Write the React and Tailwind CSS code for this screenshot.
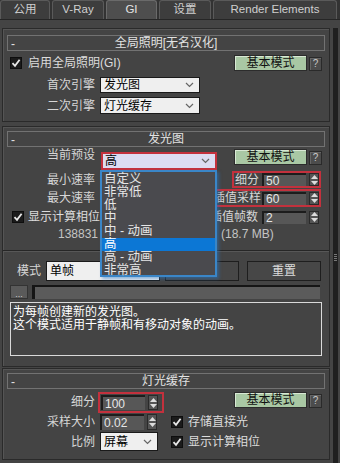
import React from "react";

const FONT = "font-['Liberation_Sans','Noto_Sans_CJK_SC',sans-serif]";

function Check() {
  return (
    <span className="inline-flex w-[12px] h-[12px] bg-[#1b1b1b] border border-[#0e0e0e] items-center justify-center shrink-0">
      <svg width="10" height="10" viewBox="0 0 10 10">
        <path d="M1.5 5.2 L4 7.8 L8.6 1.8" stroke="#e8e8e8" strokeWidth="1.8" fill="none" />
      </svg>
    </span>
  );
}

function Chevron() {
  return (
    <svg width="9" height="6" viewBox="0 0 9 6" className="ml-auto mr-[5px] shrink-0">
      <path d="M1 1 L4.5 4.5 L8 1" stroke="#666" fill="none" strokeWidth="1.2" />
    </svg>
  );
}

function Spin() {
  return (
    <div className="w-[10px] h-full flex flex-col items-center justify-center gap-[2px] bg-[#555] border border-[#2a2a2a] shrink-0">
      <svg width="7" height="4" viewBox="0 0 7 4"><path d="M0 4 L3.5 0 L7 4Z" fill="#ddd" /></svg>
      <svg width="7" height="4" viewBox="0 0 7 4"><path d="M0 0 L3.5 4 L7 0Z" fill="#ddd" /></svg>
    </div>
  );
}

function Num({ v, w = "w-[44px]" }) {
  return (
    <div className="flex h-full items-stretch gap-[3px]">
      <div className={w + " bg-[#575757] border-t-2 border-l-2 border-[#1c1c1c] text-[12px] text-[#e6e6e6] leading-none flex items-center pl-[2px]"}>{v}</div>
      <Spin />
    </div>
  );
}

function GreenBtn() {
  return (
    <div className="w-[73px] h-[16px] bg-[#a9c8a4] border border-[#2c2c2c] shadow-[inset_1px_1px_0_#d8e8d4] flex items-center justify-center text-[12px] leading-none text-[#111] shrink-0">
      基本模式
    </div>
  );
}

function Q() {
  return (
    <div className="w-[13px] h-[14px] bg-[#4c4c4c] border border-[#2a2a2a] shadow-[inset_1px_1px_0_#666] flex items-center justify-center text-[10px] leading-none text-[#c8c8c8] shrink-0 mt-[2px]">
      ?
    </div>
  );
}

function Header({ title, mt }) {
  return (
    <div className={"mx-[4px] h-[16px] border border-[#727272] flex items-center relative text-[12px] leading-none text-[#e2e2e2] shrink-0 " + mt}>
      <span className="absolute left-[3px] top-[2px] text-[12px]">-</span>
      <span className="mx-auto">{title}</span>
    </div>
  );
}

function Label({ children, w = "w-[92px]" }) {
  return <div className={w + " text-right text-[12px] leading-none text-[#d6d6d6] shrink-0"}>{children}</div>;
}

const RED = "border-2 border-[#c3313d]";

export default function App() {
  const presets = ["自定义", "非常低", "低", "中", "中 - 动画", "高", "高 - 动画", "非常高"];
  return (
    <div className={"w-[340px] h-[463px] overflow-hidden bg-[#444444] flex flex-col " + FONT}>
      {/* tabs */}
      <div className="h-[20px] flex gap-[2px] bg-[#333] border-b border-[#262626] shrink-0">
        {[
          ["公用", "w-[50px]", false],
          ["V-Ray", "w-[52px]", false],
          ["GI", "w-[51px]", true],
          ["设置", "w-[52px]", false],
          ["Render Elements", "w-[124px]", false],
        ].map(([t, w, a]) => (
          <div
            key={t}
            className={
              w +
              " h-full rounded-t-[3px] border border-b-0 flex items-center justify-center text-[11.5px] leading-none " +
              (a ? "bg-[#4e4e4e] border-[#6a6a6a] text-[#e4e4e4]" : "bg-[#3d3d3d] border-[#5a5a5a] text-[#cfcfcf]")
            }
          >
            {t}
          </div>
        ))}
      </div>

      <div className="flex flex-1 pt-[8px]">
        <div className="w-[328px] ml-[2px] flex flex-col">
          {/* Rollout 1 */}
          <div className="h-[94px] border border-[#2a2a2a] shadow-[inset_1px_1px_0_#555] flex flex-col shrink-0">
            <Header title="全局照明[无名汉化]" mt="mt-[6px]" />
            <div className="mt-[4px] h-[16px] flex items-center pl-[7px] pr-[7px]">
              <Check />
              <span className="ml-[6px] text-[12px] leading-none text-[#dcdcdc]">启用全局照明(GI)</span>
              <div className="ml-auto flex items-start gap-[2px] h-full">
                <GreenBtn />
                <Q />
              </div>
            </div>
            <div className="mt-[6px] h-[16px] flex items-center">
              <Label>首次引擎</Label>
              <div className="ml-[5px] w-[100px] h-[16px] bg-[#efefef] border border-[#1a1a1a] flex items-center pl-[3px] text-[12px] leading-none text-black">
                发光图<Chevron />
              </div>
            </div>
            <div className="mt-[4px] h-[17px] flex items-center">
              <Label>二次引擎</Label>
              <div className="ml-[5px] w-[100px] h-[17px] bg-[#efefef] border border-[#1a1a1a] flex items-center pl-[3px] text-[12px] leading-none text-black">
                灯光缓存<Chevron />
              </div>
            </div>
          </div>

          {/* Rollout 2 */}
          <div className="mt-[4px] h-[241px] border border-[#2a2a2a] shadow-[inset_1px_1px_0_#555] flex flex-col shrink-0">
            <Header title="发光图" mt="mt-[4px]" />
            {/* row A */}
            <div className="mt-[2px] h-[21px] flex items-start">
              <Label>当前预设</Label>
              <div className="relative ml-[6px] mt-[3px] z-10">
                <div className={"w-[116px] h-[18px] bg-[#dcdcf2] flex items-center pl-[2px] text-[12px] leading-none text-black " + RED}>
                  高<Chevron />
                </div>
                <div className="absolute left-[-1px] top-[18px] w-[117px] h-[107px] bg-[#4a4a4e] border-2 border-[#3a86c8] shadow-[2px_2px_3px_rgba(40,120,200,0.5)] flex flex-col pt-[1px]">
                  {presets.map((p) => (
                    <div
                      key={p}
                      className={
                        "h-[13px] pl-[2px] text-[12.5px] leading-[13px] " +
                        (p === "高" ? "bg-[#0c77d5] text-white" : "text-[#e6e6e6]")
                      }
                    >
                      {p}
                    </div>
                  ))}
                </div>
              </div>
              <div className="ml-auto mr-[7px] flex items-start gap-[2px]">
                <GreenBtn />
                <Q />
              </div>
            </div>
            {/* row B */}
            <div className="mt-[1px] h-[17px] flex items-center">
              <Label>最小速率</Label>
              <div className={"ml-auto mr-[8px] w-[89px] h-[17px] flex items-center " + RED}>
                <span className="ml-[1px] text-[12px] leading-none text-[#d6d6d6]">细分</span>
                <div className="ml-auto h-[13px] mr-[0px]">
                  <Num v="50" />
                </div>
              </div>
            </div>
            {/* row C */}
            <div className="mt-[1px] h-[18px] flex items-center">
              <Label>最大速率</Label>
              <div className={"ml-auto mr-[8px] w-[114px] h-[18px] flex items-center " + RED}>
                <span className="ml-[4px] text-[12px] leading-none text-[#d6d6d6]">插值采样</span>
                <div className="ml-auto h-[13px]">
                  <Num v="60" />
                </div>
              </div>
            </div>
            {/* row D */}
            <div className="mt-[1px] h-[18px] flex items-center pl-[9px]">
              <Check />
              <span className="ml-[4px] text-[12px] leading-none text-[#dcdcdc]">显示计算相位</span>
              <div className="ml-auto mr-[10px] flex items-center h-[13px] gap-[4px]">
                <span className="text-[12px] leading-none text-[#d6d6d6]">插值帧数</span>
                <Num v="2" />
              </div>
            </div>
            {/* row E */}
            <div className="mt-[1px] h-[14px] flex items-center text-[12px] leading-none text-[#c4c4c4]">
              <div className="w-[95px] text-right">138831</div>
              <div className="ml-[123px]">(18.7 MB)</div>
            </div>
            {/* separator */}
            <div className="mt-[9px] h-[2px] border-t border-[#262626] border-b border-b-[#575757] shrink-0" />
            {/* mode row */}
            <div className="mt-[9px] h-[20px] flex items-center">
              <span className="ml-[14px] text-[12px] leading-none text-[#d6d6d6]">模式</span>
              <div className="ml-[5px] w-[114px] h-[20px] bg-[#efefef] border border-[#1a1a1a] flex items-center pl-[3px] text-[12px] leading-none text-black">
                单帧
              </div>
              <div className="ml-[5px] w-[74px] h-[20px] bg-[#474747] border border-[#1e1e1e]" />
              <div className="ml-[8px] w-[74px] h-[20px] bg-[#474747] border border-[#1e1e1e] flex items-center justify-center text-[12px] leading-none text-[#dcdcdc]">
                重置
              </div>
            </div>
            {/* path row */}
            <div className="mt-[4px] h-[14px] flex items-stretch">
              <div className="ml-[7px] w-[18px] bg-[#5a5a5a] border border-[#333] flex items-end justify-center text-[9px] leading-[8px] text-[#cfcfcf]">...</div>
              <div className="ml-[4px] w-[288px] bg-[#5b5b5b] border-l-[3px] border-t-2 border-[#151515]" />
            </div>
            {/* text box */}
            <div className="mt-[3px] ml-[7px] w-[312px] h-[54px] border border-[#dadada] px-[2px] pt-[3px] text-[12px] leading-[13px] text-white">
              <div>为每帧创建新的发光图。</div>
              <div>这个模式适用于静帧和有移动对象的动画。</div>
            </div>
          </div>

          {/* Rollout 3 */}
          <div className="mt-[1px] h-[92px] border border-[#2a2a2a] shadow-[inset_1px_1px_0_#555] flex flex-col shrink-0">
            <Header title="灯光缓存" mt="mt-[4px]" />
            <div className="mt-[3px] h-[20px] flex items-start">
              <Label w="w-[92px]"><div className="mt-[4px]">细分</div></Label>
              <div className={"ml-[3px] w-[66px] h-[21px] flex items-center pl-[1px] " + RED}>
                <div className="h-[15px]">
                  <Num v="100" />
                </div>
              </div>
              <div className="ml-auto mr-[7px] flex items-start gap-[2px]">
                <GreenBtn />
                <Q />
              </div>
            </div>
            <div className="mt-[1px] h-[17px] flex items-center">
              <Label>采样大小</Label>
              <div className="ml-[5px] h-[16px]">
                <Num v="0.02" />
              </div>
              <div className="ml-[14px]"><Check /></div>
              <span className="ml-[5px] text-[12px] leading-none text-[#dcdcdc]">存储直接光</span>
            </div>
            <div className="mt-[2px] h-[19px] flex items-center">
              <Label>比例</Label>
              <div className="ml-[5px] w-[58px] h-[19px] bg-[#efefef] border border-[#1a1a1a] flex items-center pl-[3px] text-[12px] leading-none text-black">
                屏幕<Chevron />
              </div>
              <div className="ml-[13px]"><Check /></div>
              <span className="ml-[5px] text-[12px] leading-none text-[#dcdcdc]">显示计算相位</span>
            </div>
          </div>
        </div>

        {/* scrollbar */}
        <div className="w-[10px] flex pl-[3px] pr-[2px]">
          <div className="w-full bg-[#1f1f1f] flex flex-col items-center">
            <div className="mt-[226px] flex flex-col gap-[1px]">
              {[0, 1, 2, 3].map((i) => (
                <div key={i} className="w-[3px] h-[1px] bg-[#777]" />
              ))}
            </div>
          </div>
        </div>
      </div>
    </div>
  );
}
